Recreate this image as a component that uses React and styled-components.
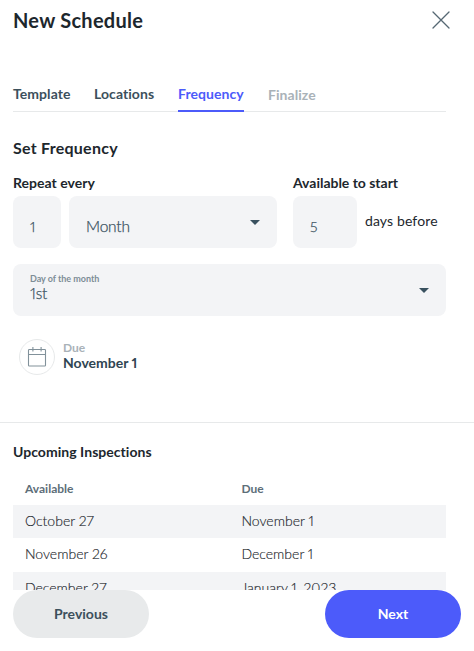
import React, { useState } from 'react'
import styled, { createGlobalStyle } from 'styled-components'

const tabs = [
  { name: 'Template', width: 81 },
  { name: 'Locations', width: 84 },
  { name: 'Frequency', width: 90 },
  { name: 'Finalize', width: 60, disabled: true },
]

const inspections = [
  { available: 'October 27', due: 'November 1' },
  { available: 'November 26', due: 'December 1' },
  { available: 'December 27', due: 'January 1, 2023' },
]

function CloseIcon() {
  return (
    <svg width="18" height="18" viewBox="0 0 18 18" fill="none" stroke="#566873" strokeWidth="1.3" strokeLinecap="round">
      <path d="M1 1L17 17M17 1L1 17" />
    </svg>
  )
}

function CalendarIcon() {
  return (
    <svg width="20" height="20" viewBox="0 0 20 20" fill="none" stroke="#81919a" strokeWidth="1.1">
      <rect x="1.5" y="2.5" width="17" height="16.5" rx="0.8" />
      <path d="M1.5 7.5H18.5M5.9 0V4.5M14.1 0V4.5" />
    </svg>
  )
}

function Caret() {
  return (
    <svg width="10" height="5" viewBox="0 0 10 5" fill="#39515f">
      <path d="M0 0H10L5 5Z" />
    </svg>
  )
}

function App() {
  const [current, setCurrent] = useState('Frequency')

  return (
    <>
      <GlobalStyle />
      <Modal>
        <Header>
          <h1>New Schedule</h1>
          <CloseButton aria-label="Close"><CloseIcon /></CloseButton>
        </Header>
        <Tabs>
          {tabs.map((tab) => (
            <Tab
              key={tab.name}
              disabled={tab.disabled}
              $width={tab.width}
              $active={tab.name === current}
              onClick={() => setCurrent(tab.name)}
            >
              <span>{tab.name}</span>
            </Tab>
          ))}
        </Tabs>
        <Title>Set Frequency</Title>
        <Fields>
          <Group $width="264px">
            <Label $spacing="0.03px">Repeat every</Label>
            <Row>
              <NumberField $width="48px">1</NumberField>
              <Select $width="208px">
                <span className="value">Month</span>
                <Caret />
              </Select>
            </Row>
          </Group>
          <Group>
            <Label $spacing="-0.02px">Available to start</Label>
            <Row>
              <NumberField $width="64px">5</NumberField>
              <Suffix>days before</Suffix>
            </Row>
          </Group>
        </Fields>
        <DaySelect>
          <div>
            <small>Day of the month</small>
            <span className="value">1st</span>
          </div>
          <Caret />
        </DaySelect>
        <DueDate>
          <div className="icon"><CalendarIcon /></div>
          <div className="date">
            <span>Due</span>
            <strong>November 1</strong>
          </div>
        </DueDate>
        <Upcoming>
          <h3>Upcoming Inspections</h3>
          <TableHead>
            <span>Available</span>
            <span>Due</span>
          </TableHead>
          {inspections.map((item) => (
            <TableRow key={item.available}>
              <span>{item.available}</span>
              <span>{item.due}</span>
            </TableRow>
          ))}
        </Upcoming>
        <Footer>
          <Button>Previous</Button>
          <Button $primary>Next</Button>
        </Footer>
      </Modal>
    </>
  )
}

const GlobalStyle = createGlobalStyle`
  * {
    box-sizing: border-box;
  }
  body {
    margin: 0;
    background: #fff;
    color: #1d272d;
    font-family: Lato, "Liberation Sans", sans-serif;
    font-variant-ligatures: none;
    font-variant-numeric: proportional-nums;
  }
  button {
    font-family: inherit;
    border: none;
    background: none;
    padding: 0;
    cursor: pointer;
  }
  h1, h2, h3 {
    margin: 0;
  }
`;
const Modal = styled.div`
  display: flex;
  flex-direction: column;
  width: 474px;
  height: 651px;
  overflow: hidden;
  white-space: nowrap;
`;
const Header = styled.div`
  display: flex;
  justify-content: space-between;
  align-items: center;
  height: 40px;
  padding: 0 24px 0 13px;
  h1 {
    font-size: 20px;
    line-height: 40px;
    font-weight: 700;
    letter-spacing: 0.27px;
  }
`;
const CloseButton = styled.button`
  display: flex;
`;
const Tabs = styled.div`
  display: flex;
  height: 34px;
  margin: 38px 28px 0 13px;
  border-bottom: 1px solid #e7e9ea;
`;
const Tab = styled.button`
  width: ${(p) => p.$width}px;
  height: 34px;
  text-align: left;
  font-size: 14px;
  font-weight: 700;
  letter-spacing: 0.06px;
  color: ${(p) => (p.disabled ? '#a9b2b8' : p.$active ? '#4c5bfa' : '#3c505c')};
  span {
    display: inline-block;
    height: 34px;
    line-height: ${(p) => (p.disabled ? 33 : 31)}px;
    border-bottom: ${(p) => (p.$active ? '2px solid #4c5bfa' : 'none')};
  }
`;
const Title = styled.h2`
  margin: 26px 0 0 13px;
  font-size: 16px;
  line-height: 20px;
  font-weight: 700;
  letter-spacing: 0.25px;
`;
const Fields = styled.div`
  display: flex;
  gap: 16px;
  margin-top: 16px;
  padding-left: 13px;
`;
const Group = styled.div`
  width: ${(p) => p.$width || 'auto'};
`;
const Label = styled.div`
  height: 22px;
  line-height: 18px;
  font-size: 14px;
  font-weight: 700;
  letter-spacing: ${(p) => p.$spacing};
`;
const Row = styled.div`
  display: flex;
  gap: 8px;
`;
const Field = styled.div`
  width: ${(p) => p.$width};
  height: 52px;
  padding: 0 17px;
  border-radius: 8px;
  background: #f3f4f6;
  color: #39515f;
  .value {
    font-size: 15.5px;
    font-weight: 300;
    letter-spacing: -0.2px;
    -webkit-text-stroke: 0.25px #39515f;
  }
`;
const NumberField = styled(Field)`
  padding: 11px 17px 0;
  font-size: 14px;
  font-weight: 300;
  line-height: 40px;
  -webkit-text-stroke: 0.25px #39515f;
`;
const Select = styled(Field)`
  display: flex;
  align-items: center;
  justify-content: space-between;
  .value {
    padding-top: 7px;
  }
`;
const Suffix = styled.span`
  line-height: 50px;
  font-size: 14px;
  letter-spacing: 0.12px;
`;
const DaySelect = styled(Select)`
  margin: 16px 28px 0 13px;
  flex: none;
  small {
    display: block;
    font-size: 9px;
    line-height: 11px;
    font-weight: 700;
    letter-spacing: -0.03px;
    color: #7d8d96;
  }
  .value {
    display: block;
    height: 23px;
    padding: 0;
    line-height: 19px;
  }
`;
const DueDate = styled.div`
  display: flex;
  gap: 8px;
  height: 36px;
  margin: 23px 0 0 19px;
  .icon {
    display: flex;
    align-items: center;
    justify-content: center;
    width: 36px;
    height: 36px;
    border: 1px solid #e7e9ea;
    border-radius: 50%;
  }
  .date {
    display: flex;
    flex-direction: column;
    padding-top: 2px;
  }
  span {
    color: #a9b2b8;
    font-size: 12px;
    line-height: 14px;
    font-weight: 700;
  }
  strong {
    color: #2f4552;
    font-size: 14px;
    line-height: 15px;
  }
`;
const Upcoming = styled.div`
  flex: none;
  height: 168px;
  margin-top: 47px;
  padding: 20px 28px 0 13px;
  border-top: 1px solid #e7e9ea;
  overflow: hidden;
  h3 {
    font-size: 14px;
    line-height: 18px;
    font-weight: 700;
    letter-spacing: 0.04px;
  }
`;
const TableHead = styled.div`
  display: grid;
  grid-template-columns: 216.5px 1fr;
  height: 44px;
  padding: 19px 12px 0;
  color: #5d6e79;
  font-size: 12px;
  line-height: 17px;
  font-weight: 700;
`;
const TableRow = styled.div`
  display: grid;
  grid-template-columns: 216.5px 1fr;
  height: 33.4px;
  padding: 0 12px;
  font-size: 14px;
  font-weight: 300;
  line-height: 31px;
  -webkit-text-stroke: 0.15px #1d272d;
  &:nth-child(odd) {
    background: #f3f4f6;
  }
`;
const Footer = styled.div`
  display: flex;
  justify-content: space-between;
  padding: 0 13px;
`;
const Button = styled.button`
  width: 136px;
  height: 48px;
  padding-bottom: 2px;
  border-radius: 24px;
  font-size: 14px;
  font-weight: 700;
  color: ${(p) => (p.$primary ? '#fff' : '#3c505c')};
  background: ${(p) => (p.$primary ? '#4c5bfa' : '#e8eaeb')};
`;
export default App
